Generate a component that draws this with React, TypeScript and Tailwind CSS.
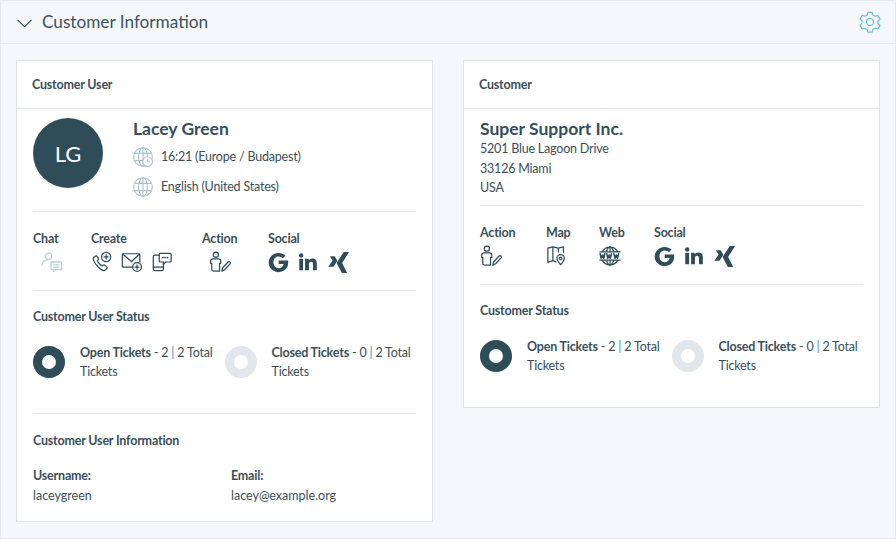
import React from "react";

const ink = "#2f4c59";

function Svg({ children, className = "w-6 h-6", stroke = ink }: { children: React.ReactNode; className?: string; stroke?: string }) {
  return (
    <svg viewBox="0 0 24 24" fill="none" stroke={stroke} strokeWidth={1.35} strokeLinecap="round" strokeLinejoin="round" className={className}>
      {children}
    </svg>
  );
}

function Globe({ clock }: { clock?: boolean }) {
  return (
    <svg viewBox="0 0 20 20" fill="none" stroke="#a9c4cc" strokeWidth={1.1} className="w-5 h-5 shrink-0">
      <circle cx="10" cy="10" r="9.3" />
      <ellipse cx="10" cy="10" rx="4.4" ry="9.3" />
      <path d="M10 .7v18.6M1.6 6.4h16.8M1.6 13.6h16.8" />
      {clock && (
        <>
          <circle cx="14.6" cy="14.6" r="4.8" fill="#fff" />
          <path d="M14.6 12v2.8h2.2" />
        </>
      )}
    </svg>
  );
}

const ChatIcon = () => (
  <Svg stroke="#b9d0d6" className="w-[23px] h-[23px]">
    <circle cx="9" cy="5.5" r="3.3" />
    <path d="M2 15c.5-3.5 2.6-5.6 6-5.8" />
    <path d="M12.500 11.500h9a1 1 0 0 1 1 1v6a1 1 0 0 1-1 1h-5.500l-2 2v-2h-1.500a1 1 0 0 1-1-1v-6a1 1 0 0 1 1-1zM14.500 14.500h5M14.500 16.800h5" />
  </Svg>
);
const PhoneIcon = () => (
  <Svg className="w-[22px] h-[22px]">
    <path d="M5 5.500 2.800 7.200c-1 1 .3 5 3.600 8.600 3.400 3.800 7.300 6 8.700 5.300l2.300-2a1 1 0 0 0 0-1.500l-2.600-2.300a1 1 0 0 0-1.300 0l-1.300 1c-1.800-.7-4.700-3.800-5.300-5.800l1.200-1.200a1 1 0 0 0 0-1.300L6.500 5.600A1 1 0 0 0 5 5.500z" />
    <circle cx="16.500" cy="6.500" r="5" />
    <path d="M16.500 4.200v4.600M14.200 6.500h4.600" />
  </Svg>
);
const MailIcon = () => (
  <Svg className="w-[22px] h-[22px]">
    <path d="M13 17.500H2.500a1 1 0 0 1-1-1V4a1 1 0 0 1 1-1h17a1 1 0 0 1 1 1v8" />
    <path d="m2 3.500 9.500 8 8.500-8" />
    <circle cx="17.500" cy="17.500" r="4.800" />
    <path d="M17.500 15.200v4.600M15.200 17.500h4.600" />
  </Svg>
);
const SmsIcon = () => (
  <Svg className="w-[22px] h-[22px]">
    <path d="M9 4.500H4.500a2 2 0 0 0-2 2v13a2 2 0 0 0 2 2h7a2 2 0 0 0 2-2v-5" />
    <path d="M2.500 17.500h11" />
    <path d="M10 2.500h11a1 1 0 0 1 1 1v7.500a1 1 0 0 1-1 1h-5l-2.500 2.500V12H10a1 1 0 0 1-1-1V3.500a1 1 0 0 1 1-1z" />
    <path d="M12.800 7.200h.4M15.300 7.200h.4M17.800 7.200h.4" strokeWidth={1.8} />
  </Svg>
);
const ActionIcon = () => (
  <Svg className="w-[22px] h-[22px]">
    <circle cx="7.500" cy="4" r="2.800" />
    <path d="M3 20v-6.500H1.800V11a2.500 2.500 0 0 1 2.500-2.500h6A2.500 2.500 0 0 1 12.800 11v2.500H11.500V22H5a2 2 0 0 1-2-2z" />
    <path d="m14 22 .8-3.500 6-6.500a1.500 1.500 0 0 1 2.200 2l-6 6.500z" />
  </Svg>
);
const MapIcon = () => (
  <Svg className="w-[22px] h-[22px]">
    <path d="M2 3.500 7.500 2l6 1.500L19 2v6M7.500 2v15M13.500 3.500v4M11 18.500l-3.500-1.500L2 19V3.500" />
    <path d="M16 10.500a4 4 0 0 1 4 4c0 2.700-4 7-4 7s-4-4.300-4-7a4 4 0 0 1 4-4z" />
    <circle cx="16" cy="14.500" r="1.400" />
  </Svg>
);
const WebIcon = () => (
  <Svg className="w-[22px] h-[22px]">
    <path d="M3.500 7.500a9.500 9.500 0 0 1 17 0M3.500 16.500a9.500 9.500 0 0 0 17 0M12 1.500v6M12 16.500v6M8 7.500c.5-3 2-4.500 4-6 2 1.500 3.500 3 4 6M8 16.500c.5 3 2 4.500 4 6 2-1.500 3.500-3 4-6M1 7.500h22M1 16.500h22" />
    <path d="m1.300 9.500 1.100 5 1.400-3.500 1.400 3.500 1.100-5M8.500 9.500l1.100 5 1.400-3.500 1.400 3.500 1.100-5M16.300 9.500l1.100 5 1.400-3.500 1.400 3.500 1.100-5" strokeWidth={1.7} />
  </Svg>
);
const GoogleIcon = () => (
  <svg viewBox="0 0 24 24" className="w-[21px] h-[21px]" fill={ink}>
    <path d="M12.200 9.800v3.900h5.700c-.6 3-2.600 4.800-5.500 4.800-3.600 0-6.200-2.900-6.200-6.800s2.500-6.600 6-6.600c2 0 3.600.8 4.800 2l3-3C17.900 2.200 15.300 1 12.200 1 5.900 1 .8 5.900.8 12s5.100 11 11.400 11c6.200 0 10.900-4.400 10.900-10.900 0-.9-.1-1.600-.2-2.300z" />
  </svg>
);
const LinkedinIcon = () => (
  <svg viewBox="0 0 24 24" className="w-[20px] h-[20px]" fill={ink}>
    <path d="M1.500 8h4.600v14H1.500zM3.800 1.500a2.600 2.600 0 1 1 0 5.200 2.600 2.600 0 0 1 0-5.200zM8.500 8h4.300v2c.7-1.200 2.200-2.300 4.400-2.300 4.500 0 5.400 2.900 5.400 6.800V22H18v-6.700c0-1.600 0-3.700-2.300-3.700s-2.600 1.800-2.600 3.600V22H8.500z" />
  </svg>
);
const XingIcon = () => (
  <svg viewBox="0 0 24 24" className="w-[23px] h-[23px]" fill={ink}>
    <path d="M17.500 1H23L15.800 12.500 21 23h-5.500L10 12.500zM3 5.500h5l2.800 4.600L6.800 16.500H1.500l4.300-6.500z" />
  </svg>
);

function IconGroup({ label, children, className = "" }: { label: string; children: React.ReactNode; className?: string }) {
  return (
    <div className={className}>
      <div className="font-bold leading-[16px]">{label}</div>
      <div className="flex items-center gap-2 mt-[3px] h-[24px]">{children}</div>
    </div>
  );
}

function Social({ className = "" }: { className?: string }) {
  return (
    <IconGroup label="Social" className={className}>
      <div className="flex items-center gap-[9px]">
        <GoogleIcon />
        <LinkedinIcon />
        <XingIcon />
      </div>
    </IconGroup>
  );
}

function Donut({ color }: { color: string }) {
  return (
    <svg viewBox="0 0 32 32" className="w-8 h-8 shrink-0">
      <circle cx="16" cy="16" r="11.500" fill="none" stroke={color} strokeWidth={9} />
    </svg>
  );
}

function TicketStat({ color, label, count }: { color: string; label: string; count: string }) {
  return (
    <div className="flex gap-[15px] w-[192px]">
      <div className="pt-[3px]">
        <Donut color={color} />
      </div>
      <p className="leading-[19px] w-[141px]">
        <span className="font-bold">{label}</span> - {count} <span className="text-[#4a90c2]">|</span> 2 Total Tickets
      </p>
    </div>
  );
}

function Card({ title, children, className = "" }: { title: string; children: React.ReactNode; className?: string }) {
  return (
    <section className={`w-[417px] bg-white border border-[#dfe3e8] ${className}`}>
      <h2 className="h-[48px] flex items-center pl-[15px] pt-[2px] font-bold border-b border-[#e3e6ea]">{title}</h2>
      {children}
    </section>
  );
}

export default function App() {
  return (
    <div
      className="w-[896px] h-[539px] overflow-hidden bg-[#f5f7fa] border border-[#e3e6ea] text-[12.500px] tracking-[-0.2px] text-[#3a4f5a]"
      style={{ fontFamily: "Lato, 'Noto Sans', sans-serif" }}
    >
      <header className="h-[43px] flex items-center justify-between border-b border-[#e3e6ea] pl-[16px] pr-[14px]">
        <div className="flex items-center gap-[10px]">
          <svg viewBox="0 0 15 9" fill="none" stroke={ink} strokeWidth={1.1} className="w-[15px] h-[9px] mt-[3px]">
            <path d="m.5.8 7 7 7-7" />
          </svg>
          <span className="text-[17.200px] tracking-normal text-[#3a5360]">Customer Information</span>
        </div>
        <svg viewBox="0 0 24 24" fill="none" stroke="#62c3d6" strokeWidth={1.3} strokeLinejoin="round" className="w-[22px] h-[22px]">
          <path d="M9.600 2h4.800l.7 3 2.400 1.300 3-.9 2.400 4.100-2.200 2.100v2.800l2.200 2.100-2.400 4.100-3-.9-2.400 1.300-.7 3H9.600l-.7-3-2.400-1.300-3 .9L1.100 16.300l2.200-2.100v-2.800L1.100 9.500l2.400-4.100 3 .9 2.400-1.300z" transform="translate(0 -.5) scale(1 .98)" />
          <circle cx="12" cy="12" r="3.800" />
        </svg>
      </header>

      <div className="flex items-start gap-[30px] pl-[15px] pt-[16px]">
        <Card title="Customer User" className="h-[462px]">
          <div className="px-[16px]">
            <div className="flex h-[103px] pt-[9px] border-b border-[#e3e6ea]">
              <div className="w-[70px] h-[70px] rounded-full bg-[#2f4c59] text-white text-[22px] tracking-normal flex items-center justify-center">
                LG
              </div>
              <div className="ml-[30px]">
                <div className="text-[17.500px] font-bold leading-[22px] tracking-normal text-[#34505d]">Lacey Green</div>
                <div className="flex items-center gap-[8px] mt-[7px] h-[20px]">
                  <Globe clock />
                  <span>16:21 (Europe / Budapest)</span>
                </div>
                <div className="flex items-center gap-[8px] mt-[10px] h-[20px]">
                  <Globe />
                  <span>English (United States)</span>
                </div>
              </div>
            </div>

            <div className="flex h-[79px] pt-[19px] border-b border-[#e3e6ea]">
              <IconGroup label="Chat" className="w-[58px]">
                <div className="pl-[7px]"><ChatIcon /></div>
              </IconGroup>
              <IconGroup label="Create" className="w-[111px]">
                <PhoneIcon />
                <MailIcon />
                <SmsIcon />
              </IconGroup>
              <IconGroup label="Action" className="w-[66px]">
                <div className="pl-[7px]"><ActionIcon /></div>
              </IconGroup>
              <Social />
            </div>

            <div className="h-[123px] pt-[18px] border-b border-[#e3e6ea]">
              <h3 className="font-bold leading-[16px]">Customer User Status</h3>
              <div className="flex mt-[18px]">
                <TicketStat color="#2f4c59" label="Open Tickets" count="2" />
                <TicketStat color="#e2e6ed" label="Closed Tickets" count="0" />
              </div>
            </div>

            <div className="pt-[19px]">
              <h3 className="font-bold leading-[16px]">Customer User Information</h3>
              <div className="grid grid-cols-[198px_1fr] mt-[17px] leading-[20px] tracking-normal">
                <div>
                  <div className="font-bold tracking-[-0.2px]">Username:</div>
                  <div>laceygreen</div>
                </div>
                <div>
                  <div className="font-bold tracking-[-0.2px]">Email:</div>
                  <div>lacey@example.org</div>
                </div>
              </div>
            </div>
          </div>
        </Card>

        <Card title="Customer" className="h-[348px]">
          <div className="px-[16px]">
            <div className="h-[97px] pt-[9px] border-b border-[#e3e6ea]">
              <div className="text-[17.500px] font-bold leading-[21px] tracking-normal text-[#34505d]">Super Support Inc.</div>
              <div className="leading-[19.500px]">
                <div>5201 Blue Lagoon Drive</div>
                <div>33126 Miami</div>
                <div>USA</div>
              </div>
            </div>
            <div className="flex h-[79px] pt-[19px] border-b border-[#e3e6ea]">
              <IconGroup label="Action" className="w-[66px]"><ActionIcon /></IconGroup>
              <IconGroup label="Map" className="w-[53px]"><MapIcon /></IconGroup>
              <IconGroup label="Web" className="w-[55px]"><WebIcon /></IconGroup>
              <Social />
            </div>
            <div className="pt-[18px]">
              <h3 className="font-bold leading-[16px]">Customer Status</h3>
              <div className="flex mt-[18px]">
                <TicketStat color="#2f4c59" label="Open Tickets" count="2" />
                <TicketStat color="#e2e6ed" label="Closed Tickets" count="0" />
              </div>
            </div>
          </div>
        </Card>
      </div>
    </div>
  );
}
